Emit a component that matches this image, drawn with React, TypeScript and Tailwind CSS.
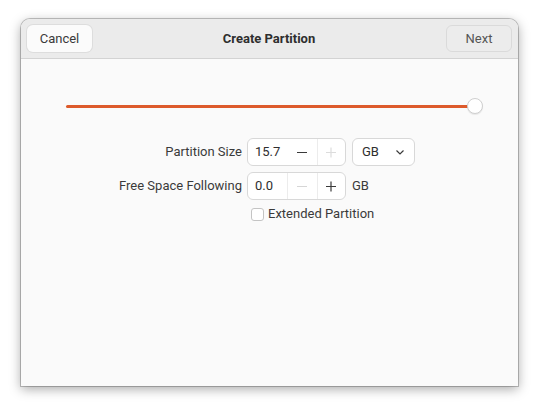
import React from "react";

const font = { fontFamily: 'Roboto, "Noto Sans", sans-serif' };

function Minus({ disabled }: { disabled?: boolean }) {
  return (
    <svg width="12" height="12" viewBox="0 0 12 12">
      <path d="M1 6.5h10" stroke={disabled ? "#d6d6d6" : "#3a3a3a"} strokeWidth="1.2" />
    </svg>
  );
}
function Plus({ disabled }: { disabled?: boolean }) {
  return (
    <svg width="12" height="12" viewBox="0 0 12 12">
      <path d="M1 6.5h10M6 1.5v10" stroke={disabled ? "#dcdcdc" : "#3a3a3a"} strokeWidth="1.2" />
    </svg>
  );
}

function Spin({ value, minusDisabled, plusDisabled, firstSep }: { value: string; minusDisabled?: boolean; plusDisabled?: boolean; firstSep?: boolean }) {
  return (
    <div className="flex h-[28px] w-[99px] rounded-[6px] border border-[#d8d8d8] bg-white overflow-hidden">
      <div className="w-[40px] flex items-center pl-[7px] text-[13px] text-[#2e2e2e]">{value}</div>
      <div className={`w-[30px] flex items-center justify-center ${firstSep ? "border-l border-[#ececec]" : ""}`}>
        <Minus disabled={minusDisabled} />
      </div>
      <div className="w-[29px] flex items-center justify-center border-l border-[#ececec]">
        <Plus disabled={plusDisabled} />
      </div>
    </div>
  );
}

export default function App() {
  return (
    <div className="w-[540px] h-[410px] bg-white pl-[21px] pt-[19px]" style={font}>
      <div className="w-[497px] h-[367px] rounded-t-[9px] bg-[#fafafa] flex flex-col overflow-hidden shadow-[0_0_0_1px_rgba(0,0,0,0.22),0_3px_12px_rgba(0,0,0,0.35)]">
        <div className="h-[40px] shrink-0 bg-[#ebebeb] border-b border-[#d3d3d3] flex items-center justify-between px-[6px]">
          <button className="h-[27px] w-[65px] rounded-[6px] bg-[#fbfbfb] text-[13px] text-[#3a3a3a] shadow-[0_0_0_1px_rgba(0,0,0,0.06)]">
            Cancel
          </button>
          <div className="text-[13px] font-bold text-[#2e2e2e]">Create Partition</div>
          <button className="h-[27px] w-[66px] rounded-[6px] bg-[#ececec] border border-[#dadada] text-[13px] text-[#555555]">
            Next
          </button>
        </div>
        <div className="flex-1 flex flex-col">
          <div className="mt-[39px] pl-[45px] pr-[35px] h-[16px] flex items-center">
            <div className="flex-1 h-[3px] bg-[#dd5a2b] rounded-l-full" />
            <div className="w-[16px] h-[16px] -ml-[8px] rounded-full bg-white border border-[#cfcfcf] shadow-[0_1px_1px_rgba(0,0,0,0.08)]" />
          </div>
          <div className="mt-[24px] grid grid-cols-[221px_99px_auto] gap-x-[5px] gap-y-[6px] items-center text-[13px] text-[#3a3a3a]">
            <div className="text-right">Partition Size</div>
            <Spin value="15.7" plusDisabled />
            <div className="ml-[1px] h-[28px] w-[63px] rounded-[6px] border border-[#d8d8d8] bg-white flex items-center justify-between pl-[9px] pr-[9px] text-[#2e2e2e]">
              <span>GB</span>
              <svg width="10" height="10" viewBox="0 0 10 10">
                <path d="M1.5 3.5L5 7l3.5-3.5" fill="none" stroke="#3a3a3a" strokeWidth="1.2" />
              </svg>
            </div>
            <div className="text-right">Free Space Following</div>
            <Spin value="0.0" minusDisabled firstSep />
            <div className="ml-[1px]">GB</div>
            <div />
            <div className="col-span-2 flex items-center h-[16px] pl-[4px]">
              <div className="w-[13px] h-[13px] rounded-[3px] border border-[#c4c4c4] bg-white" />
              <span className="ml-[4px]">Extended Partition</span>
            </div>
          </div>
        </div>
      </div>
    </div>
  );
}
